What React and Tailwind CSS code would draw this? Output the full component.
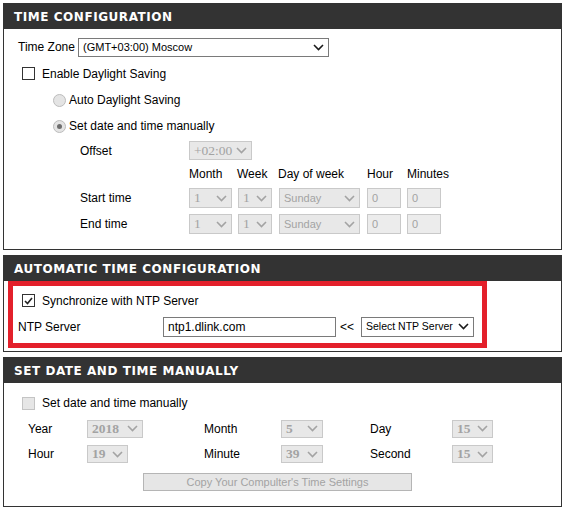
import React from 'react';

const sans = { fontFamily: '"Liberation Sans", Arial, sans-serif' };

const Chevron = ({ disabled }) => (
    <svg width="11" height="7" viewBox="0 0 11 7" className="shrink-0">
        <polyline points="1,1 5.5,5.5 10,1" fill="none" stroke={disabled ? '#a3a3a3' : '#1a1a1a'} strokeWidth="1.6" />
    </svg>
);

const Select = ({ value, w, h = 'h-[19px]', disabled, serif, bold, small, className = '' }) => (
    <div
        className={`${w} ${h} flex items-center justify-between pl-[4px] pr-[4px] border ${disabled ? 'bg-[#e8e8e8] border-[#c9c9c9] text-[#a3a3a3]' : 'bg-white border-[#7a7a7a] text-black'} ${className}`}
    >
        <span
            className={`${serif ? 'text-[13.5px] font-["Liberation_Serif",serif]' : small ? 'text-[10.5px] font-["Liberation_Sans",Arial,sans-serif]' : 'text-[11px] font-["Liberation_Sans",Arial,sans-serif]'} ${bold ? 'font-bold' : ''} leading-none whitespace-nowrap`}
        >
            {value}
        </span>
        <Chevron disabled={disabled} />
    </div>
);

const Input = ({ value, w, disabled }) => (
    <div
        className={`${w} h-[20px] flex items-center pl-[4px] border ${disabled ? 'bg-[#ececec] border-[#c9c9c9] text-[#a3a3a3] text-[11px]' : 'bg-white border-[#7a7a7a] text-black text-[12px]'}`}
    >
        {value}
    </div>
);

const Checkbox = ({ checked, disabled }) => (
    <div
        className={`w-[13px] h-[13px] border flex items-center justify-center shrink-0 ${disabled ? 'bg-[#e6e6e6] border-[#c4c4c4]' : 'bg-white border-[#333]'}`}
    >
        {checked && (
            <svg width="9" height="8" viewBox="0 0 9 8">
                <polyline points="1,4 3.5,6.5 8,1" fill="none" stroke="#222" strokeWidth="1.6" />
            </svg>
        )}
    </div>
);

const Radio = ({ checked }) => (
    <div className="w-[13px] h-[13px] rounded-full border border-[#bcbcbc] bg-[#e4e4e4] flex items-center justify-center shrink-0">
        {checked && <div className="w-[5px] h-[5px] rounded-full bg-[#6e6e6e]" />}
    </div>
);

const Header = ({ children }) => (
    <div className="h-[25px] bg-[#333] flex items-center pl-[10px] text-white text-[12px] font-bold tracking-[0.55px] font-['DejaVu_Sans',Verdana,sans-serif]">
        {children}
    </div>
);

export default function App() {
    return (
        <div className="w-[565px] h-[510px] bg-white px-[3px] pt-[3px] flex flex-col gap-[5px] text-[12px] text-black" style={sans}>
            {/* time configuration */}
            <div className="border border-[#333]">
                <Header>TIME CONFIGURATION</Header>
                <div className="pt-[5px] pb-[12px]">
                    <div className="h-[26px] flex items-center pl-[14px]">
                        <span className="w-[60px]">Time Zone</span>
                        <Select value="(GMT+03:00) Moscow" w="w-[251px]" />
                    </div>
                    <div className="h-[27px] flex items-center pl-[18px] gap-[7px]">
                        <Checkbox />
                        <span>Enable Daylight Saving</span>
                    </div>
                    <div className="h-[26px] flex items-center pl-[49px] gap-[3px]">
                        <Radio />
                        <span>Auto Daylight Saving</span>
                    </div>
                    <div className="h-[26px] flex items-center pl-[49px] gap-[3px]">
                        <Radio checked />
                        <span>Set date and time manually</span>
                    </div>
                    <div className="h-[23px] flex items-center pl-[76px]">
                        <span className="w-[109px]">Offset</span>
                        <Select value="+02:00" w="w-[63px]" disabled serif />
                    </div>
                    <div className="h-[23px] flex items-center pl-[76px]">
                        <span className="w-[109px]"></span>
                        <span className="w-[48px]">Month</span>
                        <span className="w-[41px]">Week</span>
                        <span className="w-[89px]">Day of week</span>
                        <span className="w-[40px]">Hour</span>
                        <span>Minutes</span>
                    </div>
                    {['Start time', 'End time'].map((label) => (
                        <div key={label} className="h-[26px] flex items-center pl-[76px]">
                            <span className="w-[109px]">{label}</span>
                            <div className="w-[49px]">
                                <Select value="1" w="w-[43px]" h="h-[20px]" disabled serif />
                            </div>
                            <div className="w-[41px]">
                                <Select value="1" w="w-[34px]" h="h-[20px]" disabled serif />
                            </div>
                            <div className="w-[88px]">
                                <Select value="Sunday" w="w-[81px]" h="h-[20px]" disabled />
                            </div>
                            <div className="w-[40px]">
                                <Input value="0" w="w-[34px]" disabled />
                            </div>
                            <Input value="0" w="w-[34px]" disabled />
                        </div>
                    ))}
                </div>
            </div>

            {/* automatic time configuration */}
            <div className="border border-[#333] relative">
                <Header>AUTOMATIC TIME CONFIGURATION</Header>
                <div className="pt-[7px] pb-[11px]">
                    <div className="h-[25px] flex items-center pl-[18px] gap-[7px]">
                        <Checkbox checked />
                        <span>Synchronize with NTP Server</span>
                    </div>
                    <div className="h-[27px] flex items-center pl-[14px]">
                        <span className="w-[145px]">NTP Server</span>
                        <Input value="ntp1.dlink.com" w="w-[173px]" />
                        <span className="w-[25px] pl-[4px]">&lt;&lt;</span>
                        <Select value="Select NTP Server" w="w-[113px]" h="h-[20px]" small />
                    </div>
                </div>
                <div className="absolute left-[4px] top-[25px] w-[479px] h-[67px] border-[5px] border-[#e3202b] pointer-events-none" />
            </div>

            {/* set date and time manually */}
            <div className="border border-[#333]">
                <Header>SET DATE AND TIME MANUALLY</Header>
                <div className="pt-[7px] pb-[15px]">
                    <div className="h-[26px] flex items-center pl-[18px] gap-[7px]">
                        <Checkbox disabled />
                        <span>Set date and time manually</span>
                    </div>
                    <div className="h-[25px] flex items-center pl-[24px]">
                        <span className="w-[59px]">Year</span>
                        <div className="w-[117px]">
                            <Select value="2018" w="w-[56px]" h="h-[18px]" disabled serif bold />
                        </div>
                        <span className="w-[77px]">Month</span>
                        <div className="w-[89px]">
                            <Select value="5" w="w-[42px]" h="h-[18px]" disabled serif bold />
                        </div>
                        <span className="w-[82px]">Day</span>
                        <Select value="15" w="w-[41px]" h="h-[18px]" disabled serif bold />
                    </div>
                    <div className="h-[26px] flex items-center pl-[24px]">
                        <span className="w-[59px]">Hour</span>
                        <div className="w-[117px]">
                            <Select value="19" w="w-[41px]" h="h-[18px]" disabled serif bold />
                        </div>
                        <span className="w-[77px]">Minute</span>
                        <div className="w-[89px]">
                            <Select value="39" w="w-[42px]" h="h-[18px]" disabled serif bold />
                        </div>
                        <span className="w-[82px]">Second</span>
                        <Select value="15" w="w-[41px]" h="h-[18px]" disabled serif bold />
                    </div>
                    <div className="mt-[6px] ml-[139px] w-[269px] h-[18px] flex items-center justify-center bg-[#e6e6e6] border border-[#b5b5b5] text-[#a3a3a3] text-[11px]">
                        Copy Your Compulter's Time Settings
                    </div>
                </div>
            </div>
        </div>
    );
}
